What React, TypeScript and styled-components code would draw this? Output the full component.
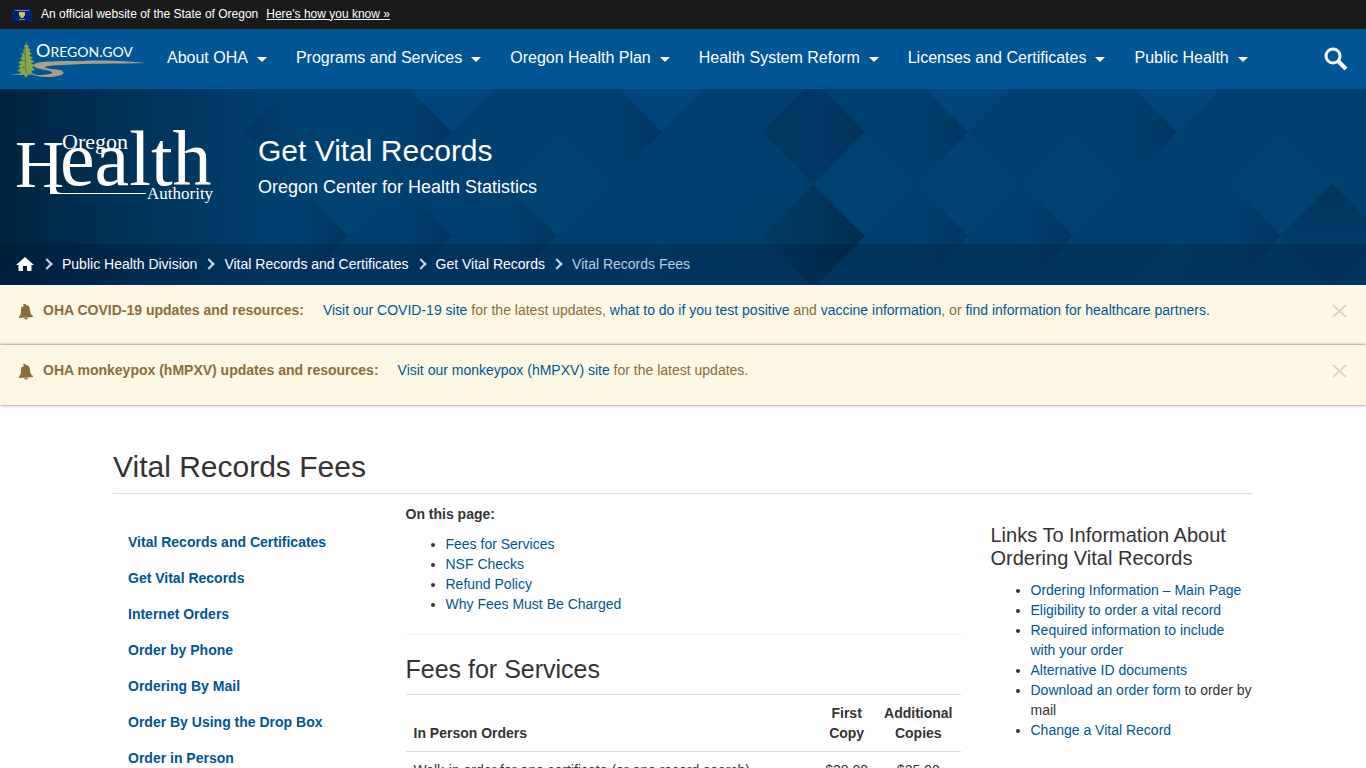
import React from 'react';
import styled, { createGlobalStyle } from 'styled-components';

const Global = createGlobalStyle`
  * { box-sizing: border-box; }
  body {
    margin: 0;
    background: #fff;
    color: #333;
    font: 14px/20px "Liberation Sans", Arial, sans-serif;
  }
  a { color: #005595; text-decoration: none; }
  ul, ol { margin: 0; padding: 0; }
`;

const OfficialBar = styled.div`
  display: flex;
  align-items: center;
  height: 29px;
  padding: 0 12px 2px;
  background: #1a1a1a;
  color: #fff;
  font-size: 12px;
  a { color: #fff; text-decoration: underline; margin-left: 8px; }
  svg { margin: 2px 9px 0 0; }
`;

const NavBar = styled.nav`
  display: flex;
  align-items: center;
  height: 60px;
  padding: 0 14px 0 10px;
  background: #005595;
`;

const Brand = styled.a`
  display: flex;
`;

const NavList = styled.ul`
  display: flex;
  flex: 1;
  list-style: none;
  gap: 29px;
  margin-left: 21px;
  padding-bottom: 3px;
`;

const NavButton = styled.button`
  display: flex;
  align-items: center;
  gap: 9px;
  padding: 0;
  border: 0;
  background: none;
  color: #fff;
  font: 16px/24px "Liberation Sans", Arial, sans-serif;
  white-space: nowrap;
  &::after {
    content: "";
    margin-top: 4px;
    border: 5px solid transparent;
    border-top-color: #fff;
    border-bottom: 0;
  }
`;

const IconButton = styled.button`
  display: flex;
  padding: 0;
  border: 0;
  background: none;
`;

const Hero = styled.header`
  position: relative;
  background: #004070;
  color: #fff;
`;

const HeroPattern = styled.svg`
  position: absolute;
  inset: 0;
  width: 100%;
  height: 100%;
`;

const HeroMain = styled.div`
  position: relative;
  display: flex;
  height: 155px;
  padding: 36px 16px 0;
`;

const HeroTitle = styled.div`
  margin-left: 42px;
  padding-top: 8px;
`;

const SiteName = styled.p`
  margin: 0;
  font-size: 30px;
  line-height: 36px;
`;

const SiteUnit = styled.p`
  margin: 8px 0 0;
  font-size: 18px;
  line-height: 20px;
`;

const Crumbs = styled.ol`
  position: relative;
  display: flex;
  align-items: center;
  height: 41px;
  padding: 0 16px 2px;
  background: linear-gradient(rgba(0, 10, 30, 0.24), rgba(0, 20, 60, 0.3));
  list-style: none;
  li { display: flex; align-items: center; color: #b8cfe2; }
  li + li::before {
    content: "";
    width: 6px;
    height: 6px;
    margin: 0 11px 0 8px;
    border: solid #c9d9e6;
    border-width: 2px 2px 0 0;
    transform: rotate(45deg);
  }
  a { color: #fff; display: flex; }
  svg { margin-right: 1px; }
`;

const Alert = styled.section`
  display: flex;
  align-items: flex-start;
  height: 60px;
  padding: 15px 18px;
  background: #fcf8e3;
  color: #8a6d3b;
  box-shadow: 0 0 3px rgba(0, 0, 0, 0.6);
  strong { margin: 0 19px 0 9px; }
  p { flex: 1; margin: 0; }
  svg { margin-top: 3px; }
`;

const Container = styled.main`
  max-width: 1170px;
  margin: 0 auto;
  padding: 44px 15px 0;
`;

const PageTitle = styled.h1`
  margin: 0;
  padding-bottom: 9px;
  border-bottom: 1px solid #ddd;
  font-size: 30px;
  line-height: 35px;
  font-weight: 400;
`;

const Columns = styled.div`
  display: grid;
  grid-template-columns: 1fr 2fr 1fr;
  margin: 0 -15px;
`;

const SideNav = styled.nav`
  padding: 30px 30px 0;
  ul { list-style: none; }
  a { display: block; padding: 8px 0; font-weight: 700; }
`;

const Article = styled.article`
  padding: 10px 15px 0;
  p { margin: 0 0 10px; font-weight: 700; }
`;

const LinkList = styled.ul`
  padding-left: 40px;
`;

const Rule = styled.hr`
  margin: 20px 0;
  border: 0;
  border-top: 1px solid #eee;
`;

const SectionTitle = styled.h2`
  margin: 0 0 10px;
  font-size: 25px;
  line-height: 29px;
  font-weight: 400;
`;

const FeeTable = styled.table`
  width: 100%;
  border-collapse: collapse;
  th, td {
    padding: 8px;
    border-top: 1px solid #ddd;
    text-align: center;
    vertical-align: bottom;
  }
  th:first-child, td:first-child { text-align: left; width: 100%; }
`;

const Aside = styled.aside`
  padding: 30px 15px 0;
`;

const AsideTitle = styled.h3`
  margin: 0 0 10px;
  font-size: 20px;
  line-height: 23px;
  font-weight: 400;
`;

const diamonds: [number, number, string][] = [
  [452, -9, 'light'], [662, -9, 'light'], [968, -9, 'light'], [1177, -9, 'light'],
  [348, 95, 'soft'], [557, 95, 'soft'], [968, 95, 'soft'], [1073, 95, 'soft'],
  [1281, 95, 'soft'], [865, 95, 'soft'], [660, 199, 'soft'], [1177, 199, 'soft'],
  [296, 43, 'left'], [400, 43, 'right'], [610, 43, 'right'], [916, 43, 'right'], [1125, 43, 'right'], [1384, 43, 'right'],
  [296, 147, 'right'], [400, 147, 'right'], [505, 147, 'right'], [916, 147, 'right'],
  [1021, 147, 'right'], [1229, 147, 'right'], [765, 147, 'faint'], [1332, 147, 'dark'],
  [813, 43, 'center'], [813, 147, 'deep'], [813, 251, 'center'],
];

function Pattern() {
  return (
    <HeroPattern viewBox="0 0 1366 196" preserveAspectRatio="xMidYMid slice" aria-hidden="true">
      <defs>
        <linearGradient id="light" x1="0" y1="0" x2="0" y2="1"><stop stopColor="#00477d" /><stop offset="1" stopColor="#00457a" /></linearGradient>
        <linearGradient id="soft"><stop stopColor="#004373" /><stop offset="1" stopColor="#004270" /></linearGradient>
        <linearGradient id="right"><stop offset=".45" stopColor="#003a66" stopOpacity="0" /><stop offset="1" stopColor="#00345d" stopOpacity=".85" /></linearGradient>
        <linearGradient id="left"><stop stopColor="#003660" stopOpacity=".7" /><stop offset=".6" stopColor="#003a66" stopOpacity="0" /></linearGradient>
        <linearGradient id="faint"><stop stopColor="#003f6d" /><stop offset="1" stopColor="#003e6b" /></linearGradient>
        <linearGradient id="center"><stop stopColor="#003960" /><stop offset=".5" stopColor="#003866" /><stop offset="1" stopColor="#00335a" /></linearGradient>
        <linearGradient id="deep"><stop stopColor="#003b66" /><stop offset=".5" stopColor="#00365e" /><stop offset="1" stopColor="#002c50" /></linearGradient>
        <linearGradient id="dark" x1="0" y1="0" x2="0" y2="1"><stop stopColor="#00345b" /><stop offset=".5" stopColor="#003c68" /><stop offset="1" stopColor="#003c68" /></linearGradient>
        <linearGradient id="edge">
          <stop stopColor="#001c30" stopOpacity=".8" />
          <stop offset=".5" stopColor="#002440" stopOpacity=".45" />
          <stop offset="1" stopColor="#002440" stopOpacity="0" />
        </linearGradient>
      </defs>
      {diamonds.map(([x, y, kind]) => (
        <path key={`${x}:${y}`} d={`M${x - 52} ${y}l52-52 52 52-52 52z`} fill={`url(#${kind})`} />
      ))}
      <rect width="280" height="196" fill="url(#edge)" />
    </HeroPattern>
  );
}

function OregonGov() {
  return (
    <svg width="136" height="40" viewBox="0 0 136 40" role="img" aria-label="Oregon.gov">
      <path d="M0 36q8-2 14-2l14 1-4 1z" fill="#5d8e91" />
      <path d="M24 25c6-3 24-3 48-3 24-1 46 0 64 2-30 1-56 0-82 2-8 0-18 1-19 2 1 2 10 2 15 3 6 2 4 5-3 6-7 2-16 1-25-1 9 0 17 0 20-2 1-2-6-3-12-4-5-1-7-3-6-5z" fill="#aa9f82" />
      <path d="M16 1l1 5 2 1-1 2 3 2-2 1 3 3-3 1 4 3-3 1 5 3-4 1 4 3-3 1 3 3-4 1 2 2-5 1-1 3h-2l-1-3-5 1 2-3-4-1 4-3-3-1 3-3-3-1 4-3-2-2 3-2-2-2 3-2-1-2 2-2-1-2 2-2z" fill="#8ba743" />
      <path d="M15 8l1 26M12 14l3 1M11 21l4 1M12 28l3 1" stroke="#4f7a4a" strokeWidth="1" fill="none" />
      <text x="26" y="18" fill="#fff" fontFamily="Lato, sans-serif" fontSize="18">O<tspan fontSize="14">REGON.GOV</tspan></text>
    </svg>
  );
}

function HealthLogo() {
  return (
    <svg width="200" height="82" viewBox="0 0 200 82" role="img" aria-label="Oregon Health Authority" fill="#fff" fontFamily="'Liberation Serif', serif">
      <text x="-1" y="62" fontSize="68">H</text>
      <text x="44" y="60" fontSize="78">ealth</text>
      <text x="46" y="24" fontSize="22">Oregon</text>
      <text x="131" y="74" fontSize="17">Authority</text>
      <path d="M34 61h6v2q0 5 6 5h84v1H34z" />
    </svg>
  );
}

function Bell() {
  return (
    <svg width="16" height="18" viewBox="0 0 16 18" fill="#8a6d3b" aria-hidden="true">
      <path d="M5 1q2-1 3 1c3 0 4 3 4 5 0 3 1 5 3 6v1l-14 1v-1c1-2 2-3 2-6 0-3 0-4 3-5zM6 15l4-.3q0 1.500-2 1.800-1 0-2-1.500z" />
    </svg>
  );
}

function CloseButton() {
  return (
    <IconButton type="button" aria-label="Close">
      <svg width="16" height="16" viewBox="0 0 16 16" stroke="#dbd6c0" strokeWidth="1.800" aria-hidden="true">
        <path d="M1 2l13 12M14 2L1 14" />
      </svg>
    </IconButton>
  );
}

const navItems = ['About OHA', 'Programs and Services', 'Oregon Health Plan', 'Health System Reform', 'Licenses and Certificates', 'Public Health'];
const sideItems = ['Vital Records and Certificates', 'Get Vital Records', 'Internet Orders', 'Order by Phone', 'Ordering By Mail', 'Order By Using the Drop Box', 'Order in Person'];

export default function App() {
  return (
    <>
      <Global />
      <OfficialBar>
        <svg width="20" height="12" viewBox="0 0 20 12" aria-hidden="true">
          <path d="M0 0h20v12H0z" fill="#00237a" />
          <path d="M3 1h14v1H3zM7 10h6v1H7z" fill="#8f8a66" />
          <path d="M7 3h6v3l-2 3H9L7 6z" fill="#d5bd66" />
        </svg>
        <span>An official website of the State of Oregon</span>
        <a href="#how">Here's how you know »</a>
      </OfficialBar>
      <NavBar>
        <Brand href="#oregon"><OregonGov /></Brand>
        <NavList>
          {navItems.map((t) => <li key={t}><NavButton type="button">{t}</NavButton></li>)}
        </NavList>
        <IconButton type="button" aria-label="Search">
          <svg width="32" height="32" viewBox="0 0 32 32" fill="none" stroke="#fff" aria-hidden="true">
            <circle cx="13" cy="13" r="7" strokeWidth="3" />
            <path d="M18 18l8 8" strokeWidth="4" />
          </svg>
        </IconButton>
      </NavBar>
      <Hero>
        <Pattern />
        <HeroMain>
          <HealthLogo />
          <HeroTitle>
            <SiteName>Get Vital Records</SiteName>
            <SiteUnit>Oregon Center for Health Statistics</SiteUnit>
          </HeroTitle>
        </HeroMain>
        <Crumbs>
          <li>
            <a href="#home" aria-label="Home">
              <svg width="18" height="16" viewBox="0 0 18 16" fill="#fff" aria-hidden="true">
                <path d="M9 1l9 8h-2.500v6H11v-5H7v5H2.500V9H0z" />
              </svg>
            </a>
          </li>
          <li><a href="#phd">Public Health Division</a></li>
          <li><a href="#vrc">Vital Records and Certificates</a></li>
          <li><a href="#gvr">Get Vital Records</a></li>
          <li>Vital Records Fees</li>
        </Crumbs>
      </Hero>
      <Alert>
        <Bell />
        <strong>OHA COVID-19 updates and resources:</strong>
        <p>
          <a href="#covid">Visit our COVID-19 site</a> for the latest updates, <a href="#positive">what to do if you test positive</a> and <a href="#vaccine">vaccine information</a>, or <a href="#partners">find information for healthcare partners.</a>
        </p>
        <CloseButton />
      </Alert>
      <Alert>
        <Bell />
        <strong>OHA monkeypox (hMPXV) updates and resources:</strong>
        <p><a href="#hmpxv">Visit our monkeypox (hMPXV) site</a> for the latest updates.</p>
        <CloseButton />
      </Alert>
      <Container>
        <PageTitle>Vital Records Fees</PageTitle>
        <Columns>
          <SideNav>
            <ul>{sideItems.map((t) => <li key={t}><a href="#page">{t}</a></li>)}</ul>
          </SideNav>
          <Article>
            <p>On this page:</p>
            <LinkList>
              <li><a href="#fees">Fees for Services</a></li>
              <li><a href="#nsf">NSF Checks</a></li>
              <li><a href="#refund">Refund Policy</a></li>
              <li><a href="#why">Why Fees Must Be Charged</a></li>
            </LinkList>
            <Rule />
            <SectionTitle id="fees">Fees for Services</SectionTitle>
            <FeeTable>
              <thead>
                <tr><th>In Person Orders</th><th>First Copy</th><th>Additional Copies</th></tr>
              </thead>
              <tbody>
                <tr><td>Walk-in order for one certificate (or one record search)</td><td>$28.00</td><td>$25.00</td></tr>
              </tbody>
            </FeeTable>
          </Article>
          <Aside>
            <AsideTitle>Links To Information About Ordering Vital Records</AsideTitle>
            <LinkList>
              <li><a href="#main">Ordering Information – Main Page</a></li>
              <li><a href="#eligibility">Eligibility to order a vital record</a></li>
              <li><a href="#required">Required information to include with your order</a></li>
              <li><a href="#id">Alternative ID documents</a></li>
              <li><a href="#form">Download an order form</a> to order by mail</li>
              <li><a href="#change">Change a Vital Record</a></li>
            </LinkList>
          </Aside>
        </Columns>
      </Container>
    </>
  );
}
